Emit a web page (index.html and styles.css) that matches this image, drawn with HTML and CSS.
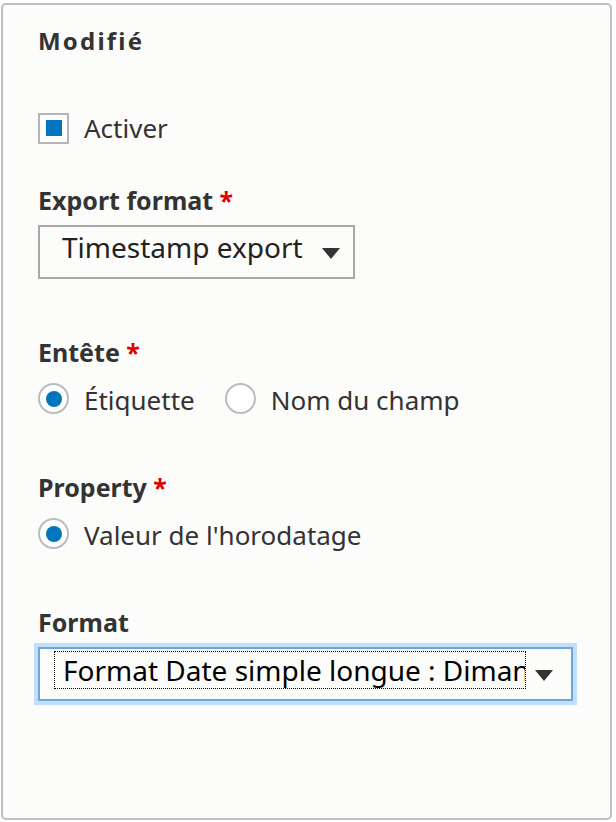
FILE: index.html
```html
<!DOCTYPE html>
<html lang="fr">
<head>
    <meta charset="UTF-8">
    <meta name="viewport" content="width=device-width, initial-scale=1.0">
    <title>Modifié</title>
    <link rel="stylesheet" href="styles.css">
</head>
<body>
    <div class="panel">
        <h2 class="panel-title">Modifié</h2>

        <label class="check-row">
            <span class="checkbox checked"></span>
            <span>Activer</span>
        </label>

        <div class="field field-first">
            <div class="field-label">Export format <span class="required">*</span></div>
            <div class="select select-export">
                <span class="select-value">Timestamp export</span>
                <span class="select-arrow"></span>
            </div>
        </div>

        <div class="field field-after-select">
            <div class="field-label">Entête <span class="required">*</span></div>
            <div class="radio-group">
                <label class="radio-row">
                    <span class="radio checked"></span>
                    <span>Étiquette</span>
                </label>
                <label class="radio-row">
                    <span class="radio"></span>
                    <span>Nom du champ</span>
                </label>
            </div>
        </div>

        <div class="field">
            <div class="field-label">Property <span class="required">*</span></div>
            <div class="radio-group">
                <label class="radio-row">
                    <span class="radio checked"></span>
                    <span>Valeur de l'horodatage</span>
                </label>
            </div>
        </div>

        <div class="field">
            <div class="field-label">Format</div>
            <div class="select select-focus">
                <span class="select-value">Format Date simple longue : Dimanche, 20 mars 2016 - 14:30</span>
                <span class="select-arrow"></span>
            </div>
        </div>
    </div>
</body>
</html>
```

FILE: styles.css
```css
body {
    margin: 0;
    background-color: #ffffff;
    font-family: "Noto Sans", "Open Sans", sans-serif;
    color: #333333;
}
.panel {
    box-sizing: border-box;
    width: 611px;
    height: 817px;
    margin: 3px 0 0 1px;
    padding: 20px 0 0 35px;
    background-color: #fcfcfa;
    border: 2px solid #bfbfbf;
    border-radius: 5px;
}
.panel-title {
    margin: 0 0 55px 0;
    font-size: 24px;
    line-height: 32px;
    font-weight: bold;
    letter-spacing: 2.2px;
}
.check-row {
    display: flex;
    align-items: center;
    gap: 15px;
    font-size: 26px;
    line-height: 32px;
}
.checkbox {
    box-sizing: border-box;
    width: 31px;
    height: 31px;
    border: 2px solid #b5b5b5;
    background-color: #ffffff;
    display: flex;
    justify-content: center;
    align-items: center;
}
.checkbox.checked::before {
    content: "";
    width: 16px;
    height: 16px;
    background-color: #0074bd;
}
.field {
    margin-top: 54px;
}
.field-first {
    margin-top: 40px;
}
.field-after-select {
    margin-top: 57px;
}
.field-label {
    font-size: 25px;
    line-height: 32px;
    font-weight: bold;
}
.required {
    color: #e00000;
}
.select {
    box-sizing: border-box;
    display: flex;
    align-items: flex-start;
    width: 317px;
    height: 54px;
    margin-top: 9px;
    padding: 2px 13px 0 14px;
    background-color: #fcfcfa;
    border: 2px solid #a8a8a8;
    color: #222222;
}
.select-value {
    display: block;
    padding: 0 0 0 8px;
    font-size: 28px;
    line-height: 36px;
    white-space: nowrap;
    overflow: hidden;
}
.select-arrow {
    width: 0;
    height: 0;
    margin: 19px 0 0 auto;
    border-left: 9px solid transparent;
    border-right: 9px solid transparent;
    border-top: 11px solid #333333;
}
.select-focus {
    width: 535px;
    padding-right: 18px;
    border-color: #6fa6d5;
    box-shadow: 0 0 0 4px #bfdffb;
    color: #000000;
}
.select-focus .select-value {
    flex: 1;
    border: 1px dotted #000000;
    margin-right: 9px;
}
.radio-group {
    display: flex;
    gap: 30px;
    margin-top: 15px;
}
.radio-row {
    display: flex;
    align-items: center;
    gap: 15px;
    font-size: 26px;
    line-height: 32px;
}
.radio {
    box-sizing: border-box;
    width: 31px;
    height: 31px;
    margin-bottom: 3px;
    border: 2px solid #b7bdc3;
    border-radius: 50%;
    background-color: #ffffff;
    display: flex;
    justify-content: center;
    align-items: center;
}
.radio.checked::before {
    content: "";
    width: 16px;
    height: 16px;
    border-radius: 50%;
    background-color: #0074bd;
}
```
